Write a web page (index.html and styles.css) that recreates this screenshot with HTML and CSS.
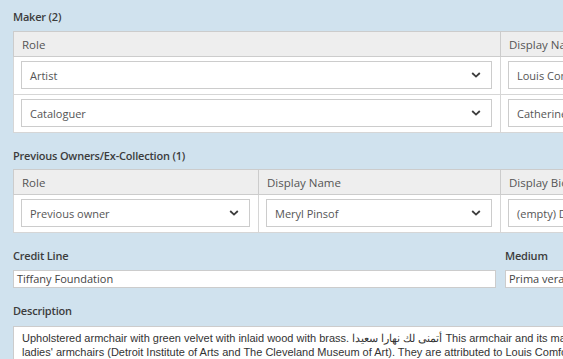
FILE: index.html
```html
<!DOCTYPE html>
<html>
  <head>
    <meta charset="utf-8" />
    <title>Object record</title>
    <link rel="stylesheet" href="styles.css">
  </head>
  <body>
    <div class="page">
      <!-- Maker -->
      <section class="group">
        <div class="label">Maker (2)</div>
        <table class="grid">
          <tr>
            <th class="col-wide">Role</th>
            <th>Display Name</th>
          </tr>
          <tr>
            <td><div class="select"><span>Artist</span><svg class="chev" viewBox="0 0 10 6"><path d="M1.2 1 L5 4.6 L8.8 1" /></svg></div></td>
            <td><div class="field">Louis Comfort Tiffany</div></td>
          </tr>
          <tr>
            <td><div class="select"><span>Cataloguer</span><svg class="chev" viewBox="0 0 10 6"><path d="M1.2 1 L5 4.6 L8.8 1" /></svg></div></td>
            <td><div class="field">Catherine Hoover Voorsanger</div></td>
          </tr>
        </table>
      </section>

      <!-- Previous owners -->
      <section class="group">
        <div class="label label-tight">Previous Owners/Ex-Collection (1)</div>
        <table class="grid">
          <tr>
            <th class="col-first">Role</th>
            <th class="col-second">Display Name</th>
            <th>Display Bio</th>
          </tr>
          <tr>
            <td><div class="select"><span>Previous owner</span><svg class="chev" viewBox="0 0 10 6"><path d="M1.2 1 L5 4.6 L8.8 1" /></svg></div></td>
            <td><div class="select"><span>Meryl Pinsof</span><svg class="chev" viewBox="0 0 10 6"><path d="M1.2 1 L5 4.6 L8.8 1" /></svg></div></td>
            <td><div class="field">(empty) Display Bio</div></td>
          </tr>
        </table>
      </section>

      <!-- Credit line / medium -->
      <section class="group row">
        <div class="cell-wide">
          <div class="label">Credit Line</div>
          <div class="input">Tiffany Foundation</div>
        </div>
        <div class="cell-rest">
          <div class="label">Medium</div>
          <div class="input">Prima vera wood, velvet, brass</div>
        </div>
      </section>

      <!-- Description -->
      <section class="group">
        <div class="label label-loose">Description</div>
        <div class="textarea">
          Upholstered armchair with green velvet with inlaid wood with brass. أتمنى لك نهارا سعيدا This armchair and its mate, a pair of matching<br>
          ladies' armchairs (Detroit Institute of Arts and The Cleveland Museum of Art). They are attributed to Louis Comfort Tiffany<br>
          and H. O. Havemeyer's Fifth Avenue house in New York in 1891–92. In addition, its distinctive inlay is inspired by Islamic art
        </div>
      </section>
    </div>
  </body>
</html>
```

FILE: styles.css
```css
/* 頁面底色與字型 */
body {
  margin: 0;
  padding: 0;
  background-color: rgb(208, 226, 238);
  font-family: "Open Sans", "Noto Sans", sans-serif;
  color: rgb(68, 68, 68);
  overflow: hidden;
}
.page {
  width: 1100px;
  padding: 8px 0 0 13px;
}

/* 1. 每一組欄位 */
.group {
  margin-bottom: 14px;
}
.label {
  font-size: 11px;
  font-weight: 600;
  height: 18px;
  line-height: 18px;
  margin-bottom: 5px;
  letter-spacing: -0.2px;
  color: rgb(60, 60, 60);
}
.label-tight {
  margin-bottom: 4px;
}
.label-loose {
  margin-bottom: 6px;
}

/* 2. 表格 */
.grid {
  border-collapse: collapse;
  width: 1000px;
  background-color: #fff;
  border: 1px solid rgb(196, 196, 196);
}
.grid th {
  background-color: rgb(238, 238, 238);
  font-weight: normal;
  font-size: 11.5px;
  text-align: left;
  height: 24px;
  padding: 0 8px;
  border: 1px solid rgb(204, 204, 204);
  color: rgb(85, 85, 85);
}
.grid td {
  padding: 4px 8px 5px 7px;
  border: 1px solid rgb(214, 214, 214);
  vertical-align: middle;
}
.col-wide {
  width: 470px;
}
.col-first {
  width: 228px;
}
.col-second {
  width: 225px;
}

/* 3. 下拉選單與輸入框 */
.select,
.field {
  display: flex;
  align-items: center;
  justify-content: space-between;
  height: 26px;
  padding: 0 8px;
  border: 1px solid rgb(204, 204, 204);
  background-color: #fff;
  font-size: 11px;
  color: rgb(85, 85, 85);
  white-space: nowrap;
  overflow: hidden;
}
.chev {
  width: 10px;
  height: 6px;
  margin-right: 2px;
}
.chev path {
  fill: none;
  stroke: rgb(60, 60, 60);
  stroke-width: 1.8;
}

/* 4. 兩欄排列 */
.row {
  display: flex;
  gap: 9px;
  margin-bottom: 14px;
}
.cell-wide {
  width: 483px;
}
.cell-rest {
  flex: 1;
}
.input {
  height: 16px;
  line-height: 16px;
  padding: 0 3px;
  border: 1px solid rgb(204, 204, 204);
  background-color: #fff;
  font-size: 11px;
  color: rgb(68, 68, 68);
  white-space: nowrap;
  overflow: hidden;
}

/* 5. 描述 */
.textarea {
  width: 1000px;
  height: 80px;
  padding: 4px 8px;
  border: 1px solid rgb(204, 204, 204);
  background-color: #fff;
  font-family: "Liberation Sans", Arial, sans-serif;
  font-size: 11px;
  line-height: 14px;
  color: rgb(51, 51, 51);
  white-space: nowrap;
}
```
